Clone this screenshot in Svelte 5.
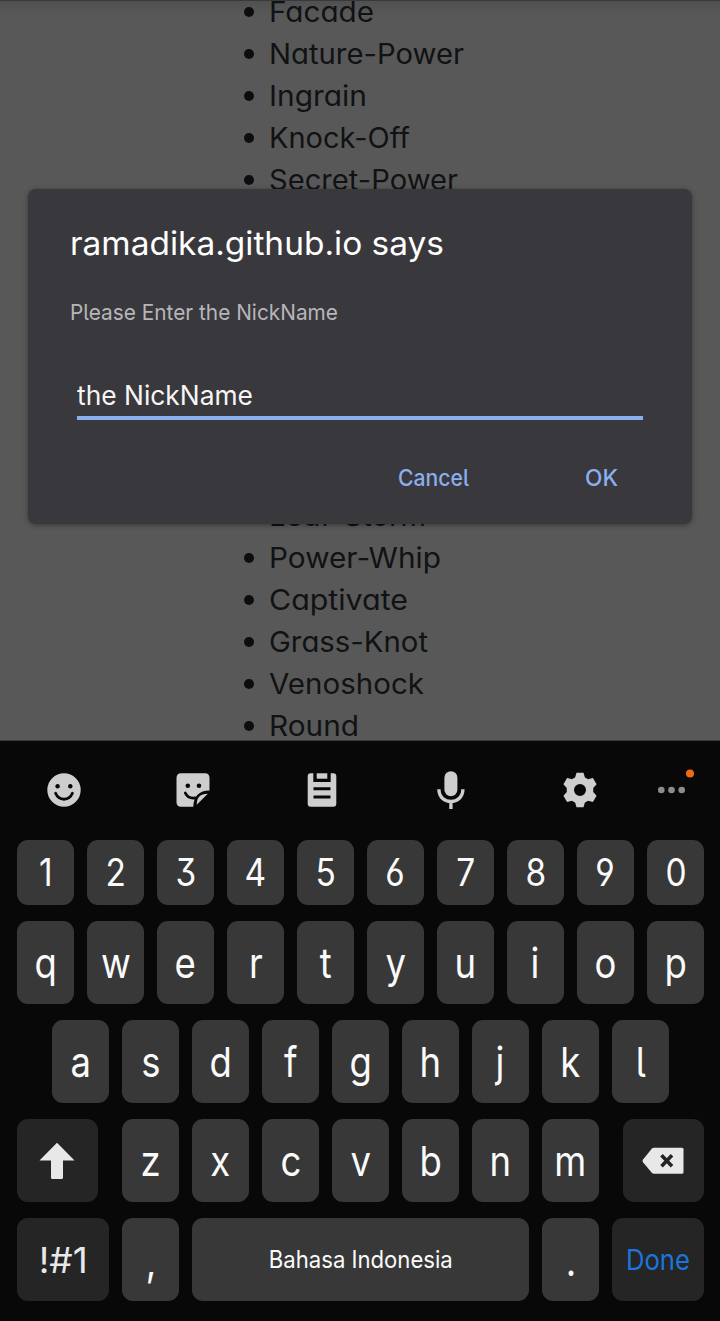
<script>
  const movesAbove = [
    ['Facade', 105], ['Nature-Power', 195], ['Ingrain', 98], ['Knock-Off', 141], ['Secret-Power', 189]
  ];
  const movesBelow = [
    ['Leaf-Storm', 157], ['Power-Whip', 172], ['Captivate', 139], ['Grass-Knot', 159], ['Venoshock', 155], ['Round', 90]
  ];
  const digits = [...'1234567890'];
  const top = [...'qwertyuiop'];
  const home = [...'asdfghjkl'];
  const bottom = [...'zxcvbnm'];

  // Stretches a label horizontally so that it fills the given width.
  function fit(node, width) {
    const natural = node.getBoundingClientRect().width;
    node.style.transform = `scaleX(${width / natural})`;
  }
</script>

{#snippet moves(items)}
  <ul>
    {#each items as [name, width]}
      <li><i></i><span class="label" use:fit={width}>{name}</span></li>
    {/each}
  </ul>
{/snippet}

{#snippet keys(chars)}
  {#each chars as c}
    <button class="key"><span>{c}</span></button>
  {/each}
{/snippet}

<div class="screen">
  <main class="page">
    {@render moves(movesAbove)}
    {@render moves(movesBelow)}
  </main>

  <section class="dialog">
    <h1><span class="label" use:fit={374}>ramadika.github.io says</span></h1>
    <p><span class="label" use:fit={268}>Please Enter the NickName</span></p>
    <div class="field"><span class="label" use:fit={176}>the NickName</span></div>
    <div class="actions">
      <button class="cancel"><span class="label" use:fit={71}>Cancel</span></button>
      <button class="ok"><span class="label" use:fit={33}>OK</span></button>
    </div>
  </section>

  <section class="keyboard">
    <div class="tools">
      <svg width="34" height="34" viewBox="0 0 34 34">
        <circle cx="17" cy="17" r="16.7" fill="#cecece" />
        <circle cx="10.6" cy="13.3" r="2.2" fill="#080808" /><circle cx="23.3" cy="13.3" r="2.2" fill="#080808" />
        <path d="M8.6 20.3C12 28.2 22 28.2 25.4 20.3" fill="none" stroke="#080808" stroke-width="2.8" stroke-linecap="round" />
      </svg>
      <svg width="34" height="34" viewBox="0 0 34 34">
        <path d="M5 .3H29Q33.5.3 33.5 5V17.5C23 17.7 17.7 23 17.3 33.7H5Q.5 33.7.5 29V5Q.5.3 5 .3Z" fill="#cecece" />
        <path d="M20.7 31.8C20.8 24 24 20.8 31.8 20.7Z" fill="#cecece" />
        <circle cx="11.8" cy="12.7" r="2.3" fill="#080808" /><circle cx="23" cy="12.7" r="2.3" fill="#080808" />
        <path d="M9.3 20C11 23.7 14.5 25.5 19 25" fill="none" stroke="#080808" stroke-width="2.8" stroke-linecap="round" />
      </svg>
      <svg width="34" height="34" viewBox="0 0 34 34">
        <rect x="2.7" y=".3" width="28.6" height="33.4" rx="3" fill="#cecece" />
        <path d="M8.3 0H25.7V9H8.3Z" fill="#080808" /><path d="M11.7.3H22.3V5.7H11.7Z" fill="#cecece" />
        <path d="M8.5 15.8H25.5M8.5 24.1H25.5" stroke="#080808" stroke-width="3" />
      </svg>
      <svg width="34" height="40" viewBox="0 0 34 40">
        <rect x="10.4" y="1.2" width="13" height="25" rx="6.5" fill="#cecece" />
        <path d="M4.9 19.3C5 35.6 28.8 35.6 28.9 19.3M16.9 31V39" fill="none" stroke="#cecece" stroke-width="3.4" />
      </svg>
      <svg width="34" height="36" viewBox="0 0 34 36">
        <path fill-rule="evenodd" d="M13.5.7H20.5L21.9 5.6Q23.5 6.2 25 7.2L29.9 6L33.6 12.2L30.2 16Q30.4 18 30.2 20L33.6 23.8L29.9 30L25 28.8Q23.5 29.8 21.9 30.4L20.5 35.3H13.5L12.1 30.4Q10.5 29.8 9 28.8L4.1 30L.4 23.8L3.8 20Q3.6 18 3.8 16L.4 12.2L4.1 6L9 7.2Q10.5 6.2 12.1 5.6ZM17 12A6 6 0 1 0 17 24A6 6 0 1 0 17 12Z" fill="#cecece" />
      </svg>
      <svg class="more" width="38" height="42" viewBox="0 -1 38 42">
        <circle cx="5.3" cy="20" r="3.3" fill="#8c8c8c" /><circle cx="15.5" cy="20" r="3.3" fill="#8c8c8c" /><circle cx="25.7" cy="20" r="3.3" fill="#8c8c8c" />
        <circle cx="34" cy="3.5" r="4" fill="#f26b12" />
      </svg>
    </div>
    <div class="row digits">{@render keys(digits)}</div>
    <div class="row">{@render keys(top)}</div>
    <div class="row">{@render keys(home)}</div>
    <div class="row">
      <button class="key fn shift" aria-label="Shift">
        <svg width="36" height="38" viewBox="0 0 36 38"><path d="M18 .8L35.5 18.5H24V35.5Q24 37 22.5 37H13.5Q12 37 12 35.5V18.5H.5Z" fill="#e8e8e8" /></svg>
      </button>
      {@render keys(bottom)}
      <button class="key fn back" aria-label="Backspace">
        <svg width="42" height="28" viewBox="0 0 42 28">
          <path d="M12 .7H40Q41.5.7 41.5 2.2V25.3Q41.5 26.8 40 26.8H12Q10.8 26.8 10 26L1 15.2Q0 13.8 1 12.4L10 1.5Q10.8.7 12 .7Z" fill="#e8e8e8" />
          <path d="M19.5 8.2L30 19.2M30 8.2L19.5 19.2" stroke="#252525" stroke-width="3.6" />
        </svg>
      </button>
    </div>
    <div class="row">
      <button class="key fn sym"><span class="label mid" use:fit={49}>!#1</span></button>
      <button class="key comma"><span>,</span></button>
      <button class="key space"><span class="label mid" use:fit={184}>Bahasa Indonesia</span></button>
      <button class="key dot"><span>.</span></button>
      <button class="key fn done"><span class="label mid" use:fit={64}>Done</span></button>
    </div>
  </section>
</div>

<style>
  :global(body) { margin: 0; background: #585858; }
  .screen {
    position: relative; width: 720px; height: 1321px; overflow: hidden;
    display: flex; flex-direction: column;
    font-family: Inter, Roboto, sans-serif;
    font-feature-settings: 'cv05', 'cv03', 'cv04', 'cv09', 'calt' 0;
  }
  .page {
    height: 741px; overflow: hidden; box-sizing: border-box; flex: none;
    display: flex; flex-direction: column; justify-content: space-between;
    background: linear-gradient(#38393b 0, #38393b 1px, #505050 1px, #585858 14px);
    border-bottom: 1px solid #3a3b3b;
  }
  ul { list-style: none; margin: 0; padding: 0 0 0 244px; color: #101214; font-size: 28px; line-height: 42px; font-feature-settings: 'cv11', 'calt' 0; }
  ul:first-child { margin-top: -9px; }
  ul:last-child { margin-bottom: -7px; }
  li { display: flex; align-items: center; gap: 15px; height: 42px; }
  li i { width: 10px; height: 10px; border-radius: 50%; background: #0b0d0f; }
  .label { display: inline-block; white-space: pre; transform-origin: 0 50%; flex: none; }
  .label.mid { transform-origin: 50% 50%; }

  .dialog {
    position: absolute; left: 28px; top: 189px; width: 664px; height: 335px; box-sizing: border-box;
    padding: 32px 42px 0; border-radius: 8px; background: #39383d;
    box-shadow: 0 1px 5px rgba(0, 0, 0, .4);
  }
  h1 { margin: 0; font-weight: 400; font-size: 33px; line-height: 44px; color: #fff; }
  p { margin: 32px 0 0; font-size: 22px; line-height: 30px; color: #b6b6b8; }
  .field { margin: 49px 7px 0; height: 40px; line-height: 38px; font-size: 26.5px; color: #f6f6f6; border-bottom: 4px solid #8aaeee; }
  button { border: 0; padding: 0; font: inherit; font-feature-settings: inherit; color: inherit; background: none; }
  .actions { display: flex; margin-top: 43px; padding-left: 328px; color: #8aaeee; font-size: 22.5px; font-weight: 500; line-height: 30px; }
  .cancel { width: 187px; text-align: left; }

  .keyboard { flex: 1; background: #080808; color: #fafafa; display: flex; flex-direction: column; gap: 16px; }
  .tools { height: 83px; padding: 15px 0 0 47px; display: flex; gap: 95px; align-items: center; box-sizing: border-box; }
  .tools svg { flex: none; }
  .tools .more { margin-left: -36px; }
  .row { display: flex; justify-content: center; gap: 13px; height: 83px; padding: 0 16px 0 17px; }
  .digits { height: 65px; }
  .key { width: 57px; flex: none; border-radius: 11px; background: #383838; font-size: 41.5px; display: flex; align-items: center; justify-content: center; }
  .key > span:not(.label) { transform: scaleX(.88); }
  .digits .key { font-size: 38px; padding-bottom: 2px; }
  .fn { background: #252525; color: #e8e8e8; }
  .shift { width: 81px; margin-right: 11px; padding-right: 2px; }
  .back { width: 81px; margin-left: 11px; padding-right: 1px; }
  .sym { width: 92px; font-size: 35px; }
  .space { width: 337px; font-size: 24px; }
  .comma, .dot { padding-top: 3px; }
  .done { width: 92px; font-size: 28px; color: #1b75dc; }
</style>
